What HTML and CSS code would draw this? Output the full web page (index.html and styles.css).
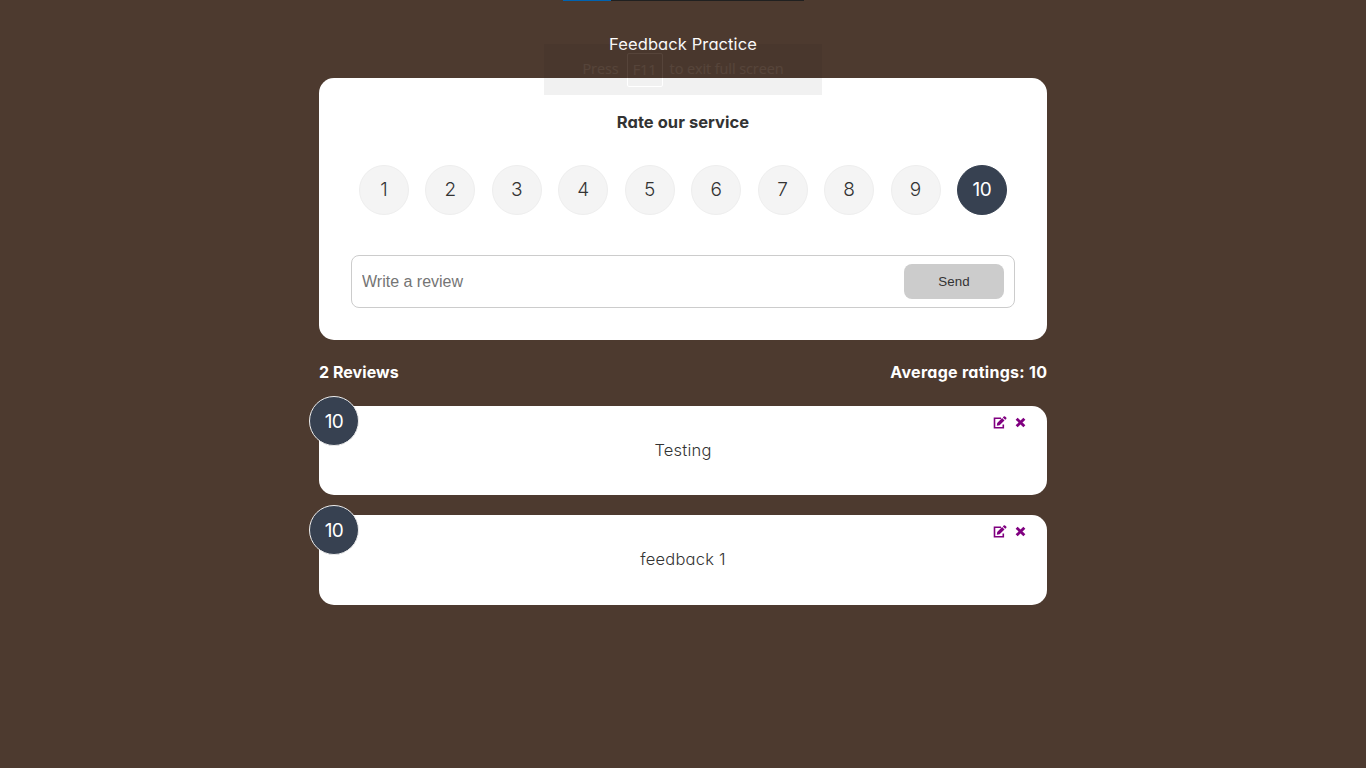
FILE: index.html
```html
<!DOCTYPE html>
<html lang="en">
<head>
<meta charset="utf-8">
<title>Feedback Practice</title>
<link rel="stylesheet" href="styles.css">
</head>
<body>
<svg class="sprite" aria-hidden="true">
  <symbol id="edit" viewBox="0 0 14 13"><path class="edit-frame" d="M8 2.300H1.500V11.700H10.300V8.500"/><path d="M3.800 9.700 4.200 6.900 9.100 2.100 11.500 4.500 6.600 9.300ZM9.800 1.400 10.700.5Q11.400-.1 12.100.5L13.200 1.600Q13.800 2.300 13.200 2.900L12.200 3.800Z"/></symbol>
  <symbol id="close" viewBox="0 0 10 10"><path d="M1.500 1.500 8.500 8.500M8.500 1.500 1.500 8.500"/></symbol>
</svg>
<header class="header">Feedback Practice</header>
<main class="container">
  <form class="card form">
    <h2 class="form-title">Rate our service</h2>
    <ul class="ratings">
      <li class="rating">1</li><li class="rating">2</li><li class="rating">3</li><li class="rating">4</li><li class="rating">5</li><li class="rating">6</li><li class="rating">7</li><li class="rating">8</li><li class="rating">9</li><li class="rating selected">10</li>
    </ul>
    <div class="input-group">
      <input class="input" type="text" placeholder="Write a review">
      <button class="send" type="button">Send</button>
    </div>
  </form>
  <div class="stats"><span class="count">2 Reviews</span><span class="average">Average ratings: 10</span></div>
  <article class="card review">
    <div class="badge">10</div>
    <div class="actions"><svg class="edit"><use href="#edit"/></svg><svg class="close"><use href="#close"/></svg></div>
    <p class="text">Testing</p>
  </article>
  <article class="card review">
    <div class="badge">10</div>
    <div class="actions"><svg class="edit"><use href="#edit"/></svg><svg class="close"><use href="#close"/></svg></div>
    <p class="text">feedback 1</p>
  </article>
</main>
<div class="toast"><span class="press">Press</span><span class="key">F11</span><span class="exit">to exit full screen</span></div>
<div class="strip"></div>
</body>
</html>
```
FILE: styles.css
```css
* { box-sizing: border-box; }
body {
  margin: 0;
  height: 768px;
  overflow: hidden;
  background: #4d3a2f;
  color: #333;
  font: 300 16px/26px Inter, "Open Sans", sans-serif;
  font-feature-settings: "cv11";
}
.sprite { display: none; }
.header {
  height: 78px;
  padding-top: 31px;
  text-align: center;
  color: #fff;
  font-size: 16.500px;
  font-weight: 400;
  letter-spacing: .1px;
}
.container { width: 728px; margin: 0 auto; }
.card { background: #fff; border-radius: 15px; }
.form { height: 262px; padding: 31px 32px 0; }
.form-title {
  margin: 0;
  text-align: center;
  font-size: 16.500px;
  font-weight: 650;
  line-height: 26px;
  letter-spacing: .05px;
}
.ratings {
  display: flex;
  justify-content: space-between;
  margin: 30px 8px 40px;
  padding: 0;
  list-style: none;
}
.rating {
  width: 50px;
  height: 50px;
  border: 1px solid #eee;
  border-radius: 50%;
  background: #f4f4f4;
  text-align: center;
  font-size: 19px;
  line-height: 48px;
}
.rating.selected {
  border-color: #374151;
  background: #374151;
  color: #fff;
  font-weight: 400;
  letter-spacing: -.5px;
}
.input-group {
  display: flex;
  height: 53px;
  padding: 8px 10px;
  border: 1px solid #ccc;
  border-radius: 8px;
}
.input {
  flex: 1;
  min-width: 0;
  padding: 0;
  border: 0;
  font: 16px "Liberation Sans", sans-serif;
}
.input::placeholder { color: #757575; }
.send {
  width: 100px;
  height: 35px;
  padding: 0;
  border: 0;
  border-radius: 8px;
  background: #ccc;
  color: #333;
  font: 13.33px "Liberation Sans", sans-serif;
  letter-spacing: .1px;
}
.stats {
  display: flex;
  justify-content: space-between;
  height: 66px;
  padding-top: 19px;
  color: #fff;
  font-weight: 750;
}
.count { letter-spacing: .05px; }
.average { letter-spacing: .28px; margin-right: -.28px; }
.review {
  position: relative;
  height: 89px;
  margin-bottom: 20px;
  padding-top: 31px;
}
.review:last-child { height: 90px; }
.text {
  margin: 0;
  text-align: center;
  font-size: 16.500px;
  letter-spacing: .2px;
}
.badge {
  position: absolute;
  top: -10px;
  left: -10px;
  width: 50px;
  height: 50px;
  border: 1px solid #eee;
  border-radius: 50%;
  background: #374151;
  color: #fff;
  text-align: center;
  font-size: 19px;
  font-weight: 400;
  line-height: 49px;
  letter-spacing: -.5px;
}
.actions {
  position: absolute;
  top: 10px;
  right: 21px;
  display: flex;
  gap: 8px;
}
.edit { width: 14px; height: 13px; fill: purple; }
.edit-frame { fill: none; stroke: purple; stroke-width: 1.600; }
.close {
  width: 11px;
  height: 11px;
  margin-top: 1px;
  stroke: purple;
  stroke-width: 2.600;
}
.toast {
  position: absolute;
  top: 44px;
  left: 544px;
  display: flex;
  align-items: center;
  justify-content: center;
  width: 278px;
  height: 51px;
  background: #101010;
  color: #fff;
  font: 400 14.500px/20px "Open Sans", sans-serif;
  letter-spacing: -.1px;
  opacity: .05;
}
.press, .exit { margin-top: -2px; }
.key {
  width: 36px;
  height: 34px;
  margin: 0 7px 0 8px;
  border: 1px solid #fff;
  border-radius: 2px;
  text-align: center;
  line-height: 31px;
}
.strip {
  position: absolute;
  top: 0;
  left: 563px;
  width: 241px;
  height: 1px;
  background: linear-gradient(90deg, #0063b1 48px, #202020 48px);
}
```
